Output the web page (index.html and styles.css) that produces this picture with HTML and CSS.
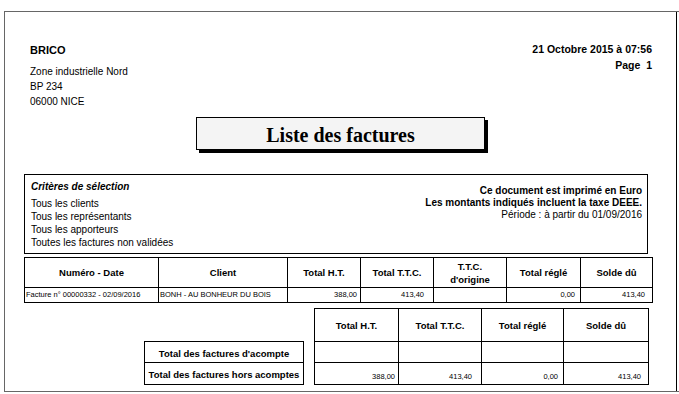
FILE: index.html
```html
<!DOCTYPE html>
<html lang="fr">
<head>
<meta charset="utf-8">
<title>Liste des factures</title>
<link rel="stylesheet" href="styles.css">
</head>
<body>
<div class="sheet">
  <div class="page">
    <header class="head">
      <div class="company">
        <div class="name">BRICO</div>
        <div class="addr">Zone industrielle Nord</div>
        <div class="addr">BP 234</div>
        <div class="addr">06000 NICE</div>
      </div>
      <div class="meta">
        <div>21 Octobre 2015 à 07:56</div>
        <div>Page&nbsp;&nbsp;1</div>
      </div>
    </header>

    <h1 class="title">Liste des factures</h1>

    <section class="criteria">
      <div class="crit-left">
        <div class="crit-title">Critères de sélection</div>
        <div class="crit-line">Tous les clients</div>
        <div class="crit-line">Tous les représentants</div>
        <div class="crit-line">Tous les apporteurs</div>
        <div class="crit-line">Toutes les factures non validées</div>
      </div>
      <div class="crit-right">
        <div class="strong">Ce document est imprimé en Euro</div>
        <div class="strong">Les montants indiqués incluent la taxe DEEE.</div>
        <div>Période : à partir du 01/09/2016</div>
      </div>
    </section>

    <div class="list">
      <div class="th">Numéro - Date</div>
      <div class="th">Client</div>
      <div class="th">Total H.T.</div>
      <div class="th">Total T.T.C.</div>
      <div class="th">T.T.C.<br>d'origine</div>
      <div class="th">Total réglé</div>
      <div class="th">Solde dû</div>

      <div class="td">Facture n° 00000332 - 02/09/2016</div>
      <div class="td">BONH - AU BONHEUR DU BOIS</div>
      <div class="td num num-tight">388,00</div>
      <div class="td num num-wide">413,40</div>
      <div class="td"></div>
      <div class="td num">0,00</div>
      <div class="td num num-mid">413,40</div>
    </div>

    <div class="totals-row">
      <div class="labels">
        <div class="lbl">Total des factures d'acompte</div>
        <div class="lbl">Total des factures hors acomptes</div>
      </div>
      <div class="totals">
        <div class="th">Total H.T.</div>
        <div class="th">Total T.T.C.</div>
        <div class="th">Total réglé</div>
        <div class="th">Solde dû</div>

        <div class="tv"></div>
        <div class="tv"></div>
        <div class="tv"></div>
        <div class="tv"></div>

        <div class="tv num num-tight">388,00</div>
        <div class="tv num num-wide">413,40</div>
        <div class="tv num">0,00</div>
        <div class="tv num num-mid">413,40</div>
      </div>
    </div>
  </div>
</div>
</body>
</html>
```

FILE: styles.css
```css
* {
  box-sizing: border-box;
}

html, body {
  margin: 0;
  padding: 0;
  background: #fff;
  overflow: hidden;
}

body {
  font-family: "Liberation Sans", Arial, sans-serif;
  color: #000;
  width: 679px;
  height: 394px;
}

.sheet {
  margin: 11px 0 0 4px;
  height: 381px;
  border-top: 1px solid #666;
  border-left: 1px solid #666;
  border-bottom: 1px solid #666;
}

.page {
  width: 672px;
  height: 100%;
  border-right: 1px solid #000;
  padding: 31px 23px 0 19px;
}

/* header */
.head {
  display: flex;
  justify-content: space-between;
  align-items: flex-start;
}

.company {
  margin-left: 6px;
}

.name {
  font-size: 11px;
  font-weight: bold;
  line-height: 15px;
  margin-bottom: 6px;
}

.addr {
  font-size: 10px;
  line-height: 15px;
}

.meta {
  margin-top: -2px;
  margin-right: 1px;
  text-align: right;
  font-size: 10.5px;
  font-weight: bold;
  line-height: 16px;
}

/* title */
.title {
  margin: 8px 0 0 172px;
  width: 289px;
  height: 33px;
  border: 1px solid #000;
  background: #f4f4f4;
  box-shadow: 3px 3px 0 #000;
  font-family: "Liberation Serif", "Times New Roman", serif;
  font-size: 20px;
  font-weight: bold;
  text-align: center;
  line-height: 28px;
  padding-top: 3px;
}

/* criteria */
.criteria {
  margin-top: 24px;
  width: 624px;
  height: 80px;
  border: 1px solid #000;
  padding: 4px 5px 0 6px;
  display: flex;
  justify-content: space-between;
  align-items: flex-start;
  font-size: 10px;
}

.crit-title {
  font-weight: bold;
  font-style: italic;
  line-height: 15px;
  margin-bottom: 3px;
}

.crit-line {
  line-height: 13px;
}

.crit-right {
  margin-top: 6px;
  text-align: right;
  line-height: 12px;
}

.strong {
  font-weight: bold;
}

/* invoice list */
.list {
  margin-top: 3px;
  display: grid;
  grid-template-columns: 134px 129px 73px 73px 73px 74px 72px;
  grid-template-rows: 30px 15px;
  width: 629px;
  border-top: 1px solid #000;
  border-left: 1px solid #000;
}

.list > div,
.totals > div,
.labels > div {
  border-right: 1px solid #000;
  border-bottom: 1px solid #000;
}

.th {
  display: flex;
  align-items: center;
  justify-content: center;
  text-align: center;
  font-size: 9.5px;
  font-weight: bold;
  line-height: 13px;
}

.td {
  display: flex;
  align-items: flex-end;
  font-size: 7.5px;
  line-height: 12px;
  padding: 0 0 1px 1px;
  white-space: nowrap;
}

.num {
  justify-content: flex-end;
  padding-right: 5px;
}

.num-tight {
  padding-right: 3px;
}

.num-wide {
  padding-right: 9px;
}

.num-mid {
  padding-right: 7px;
}

/* totals */
.totals-row {
  margin-top: 5px;
  margin-right: 4px;
  display: flex;
  justify-content: flex-end;
  align-items: flex-end;
  gap: 10px;
}

.labels {
  display: grid;
  grid-template-columns: 159px;
  grid-template-rows: 21px 22px;
  border-top: 1px solid #000;
  border-left: 1px solid #000;
}

.lbl {
  display: flex;
  align-items: center;
  justify-content: center;
  font-size: 9.5px;
  font-weight: bold;
  padding-top: 2px;
}

.totals {
  display: grid;
  grid-template-columns: 84px 83px 82px 85px;
  grid-template-rows: 33px 21px 22px;
  border-top: 1px solid #000;
  border-left: 1px solid #000;
}

.tv {
  display: flex;
  align-items: center;
  font-size: 7.5px;
  padding-top: 5px;
}
```
